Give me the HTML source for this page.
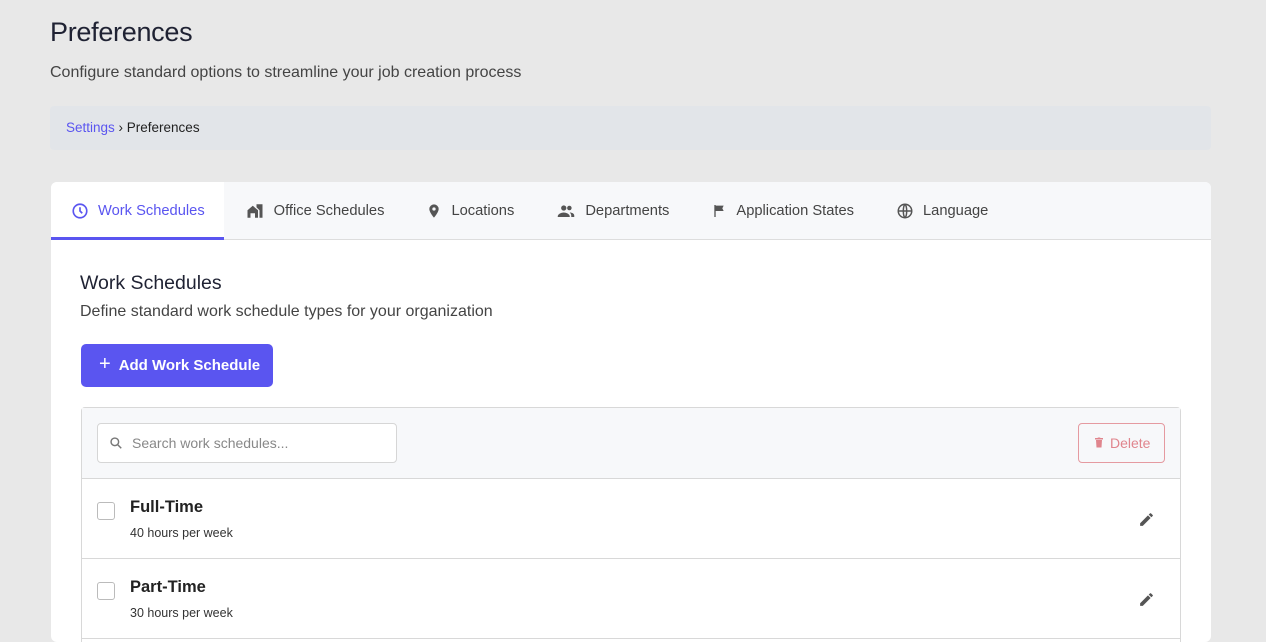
<!DOCTYPE html>
<html><head><style>
*{box-sizing:border-box;margin:0;padding:0}
body{width:1266px;height:630px;overflow:hidden;background:#e8e8e8;font-family:"Liberation Sans",sans-serif;color:#333}
h1{position:absolute;left:50px;top:17px;font-size:27px;font-weight:400;color:#1f2233;letter-spacing:-0.3px}
.sub{position:absolute;left:50px;top:64px;font-size:16px;color:#444}
.bc{position:absolute;left:50px;top:106px;width:1161px;height:44px;background:#e2e5e9;border-radius:4px;font-size:13.5px;padding:14px 16px;color:#222}
.bc a{color:#5a55f0;text-decoration:none}
.card{position:absolute;left:51px;top:182px;width:1160px;height:460px;background:#fff;border-radius:6px;overflow:hidden}
.tabs{height:58px;background:#f7f8fa;border-bottom:1px solid #ddd;display:flex}
.tab{height:58px;display:flex;align-items:center;font-size:14.7px;color:#444;padding:0 21px 0 21px}
.tab svg{margin-right:9px}
.tab.on{background:#fff;color:#5a55f0;border-bottom:3px solid #5a55f0;padding:3px 19px 0 20px}
h2{position:absolute;left:29px;top:90px;font-size:19.5px;font-weight:400;color:#1f2233}
.d{position:absolute;left:29px;top:121px;font-size:16px;color:#444}
.btn{position:absolute;left:30px;top:162px;width:192px;height:43px;background:#5a55f0;border-radius:5px;color:#fff;font-weight:700;font-size:15px;display:flex;align-items:center;padding-left:18px}
.tbl{position:absolute;left:30px;top:225px;width:1100px;height:260px;border:1px solid #d8d8d8;border-radius:4px}
.tb{height:71px;background:#f7f8fa;border-bottom:1px solid #d8d8d8;position:relative}
.srch{position:absolute;left:15px;top:15px;width:300px;height:40px;background:#fff;border:1px solid #d6d6d6;border-radius:4px;font-size:14px;color:#888;padding:11px 0 0 34px}
.srch svg{position:absolute;left:11px;top:12px}
.del{position:absolute;left:996px;top:15px;width:87px;height:40px;border:1px solid #e59aa0;border-radius:4px;color:#e0858d;font-size:14px;padding:11px 0 0 14px}
.row{height:80px;border-bottom:1px solid #d8d8d8;position:relative}
.cb{position:absolute;left:15px;top:23px;width:18px;height:18px;border:1px solid #bbb;border-radius:3px}
.t{position:absolute;left:48px;top:19px;font-size:16.5px;font-weight:700;color:#222}
.s{position:absolute;left:48px;top:47px;font-size:12.5px;color:#333}
.pen{position:absolute;left:1056px;top:32px}
</style></head><body>
<h1>Preferences</h1>
<div class="sub">Configure standard options to streamline your job creation process</div>
<div class="bc"><a>Settings</a> › Preferences</div>
<div class="card">
<div class="tabs">
<div class="tab on"><svg width="18" height="18" viewBox="0 0 24 24" fill="none" stroke="#5a55f0" stroke-width="2.2"><circle cx="12" cy="12" r="9"/><path d="M12 7v5l3 3"/></svg>Work Schedules</div>
<div class="tab"><svg width="20" height="18" viewBox="0 0 24 24" fill="#555"><path d="M2 11l7-6 7 6v10h-4v-6H6v6H2z"/><path d="M14 3h8v18h-4V11l-4-4z"/></svg>Office Schedules</div>
<div class="tab"><svg width="16" height="18" viewBox="0 0 24 24" fill="#555"><path d="M12 2a7 7 0 00-7 7c0 5 7 13 7 13s7-8 7-13a7 7 0 00-7-7zm0 9.5A2.5 2.5 0 1112 6.5a2.5 2.5 0 010 5z"/></svg>Locations</div>
<div class="tab"><svg width="20" height="18" viewBox="0 0 24 24" fill="#555"><circle cx="9" cy="8" r="3.5"/><circle cx="16.5" cy="8" r="3"/><path d="M1 19c0-3 5-5 8-5s8 2 8 5v1H1zM17 14c3 0 6 1.5 6 4v2h-4v-2c0-1.5-1-3-2-4z"/></svg>Departments</div>
<div class="tab"><svg width="16" height="18" viewBox="0 0 24 24" fill="#555"><path d="M5 3h2v18H5zM7 4h12l-2 4 2 4H7z"/></svg>Application States</div>
<div class="tab"><svg width="18" height="18" viewBox="0 0 24 24" fill="none" stroke="#555" stroke-width="2"><circle cx="12" cy="12" r="9"/><path d="M3 12h18M12 3c3 3 3 15 0 18M12 3c-3 3-3 15 0 18"/></svg>Language</div>
</div>
<h2>Work Schedules</h2>
<div class="d">Define standard work schedule types for your organization</div>
<div class="btn"><span style="font-weight:400;font-size:20px;margin-right:8px;margin-top:-3px">+</span>Add Work Schedule</div>
<div class="tbl">
<div class="tb">
<div class="srch"><svg width="14" height="14" viewBox="0 0 24 24" fill="none" stroke="#777" stroke-width="2.5"><circle cx="10" cy="10" r="6.5"/><path d="M15 15l6 6"/></svg>Search work schedules...</div>
<div class="del"><svg width="12" height="13" viewBox="0 0 24 24" fill="#e0858d" style="vertical-align:-1px;margin-right:5px"><path d="M6 7h12l-1 15H7zM4 3h5l1-1h4l1 1h5v3H4z"/></svg>Delete</div>
</div>
<div class="row"><div class="cb"></div><div class="t">Full-Time</div><div class="s">40 hours per week</div><svg class="pen" width="17" height="17" viewBox="0 0 24 24" fill="#555"><path d="M3 17.25V21h3.75L17.81 9.94l-3.75-3.75zM20.71 7.04a1 1 0 000-1.41l-2.34-2.34a1 1 0 00-1.41 0l-1.83 1.83 3.75 3.75z"/></svg></div>
<div class="row"><div class="cb"></div><div class="t">Part-Time</div><div class="s">30 hours per week</div><svg class="pen" width="17" height="17" viewBox="0 0 24 24" fill="#555"><path d="M3 17.25V21h3.75L17.81 9.94l-3.75-3.75zM20.71 7.04a1 1 0 000-1.41l-2.34-2.34a1 1 0 00-1.41 0l-1.83 1.83 3.75 3.75z"/></svg></div>
</div>
</div>
</body></html>
